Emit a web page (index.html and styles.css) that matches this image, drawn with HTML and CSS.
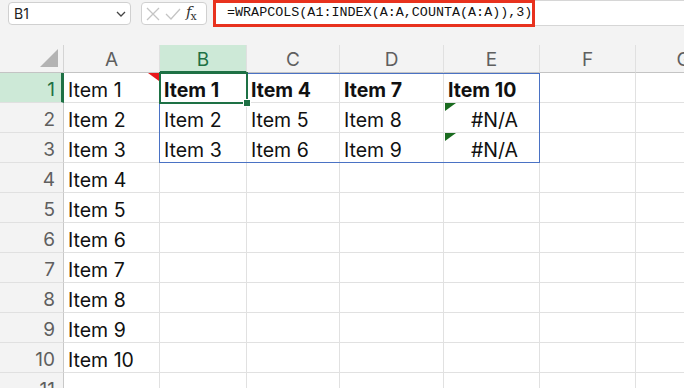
FILE: index.html
```html
<!DOCTYPE html>
<html lang="en">
<head>
    <meta charset="UTF-8">
    <title>WRAPCOLS</title>
    <link rel="stylesheet" href="styles.css">
</head>
<body>
    <div class="toolbar">
        <div class="namebox">
            <span>B1</span>
            <svg class="chev" width="10" height="6" viewBox="0 0 10 6"><path d="M1 1l4 4 4-4" fill="none" stroke="#444" stroke-width="1.3"/></svg>
        </div>
        <div class="fbuttons">
            <svg width="14" height="14" viewBox="0 0 14 14"><path d="M1 1l12 12M13 1L1 13" stroke="#c4c4c4" stroke-width="1.3"/></svg>
            <svg width="16" height="12" viewBox="0 0 16 12"><path d="M1 6l5 5L15 1" fill="none" stroke="#c4c4c4" stroke-width="1.3"/></svg>
            <span class="fx"><i>f</i><sub>x</sub></span>
        </div>
        <div class="formula">
            <span class="ftext">=WRAPCOLS(A1:INDEX(A:A,COUNTA(A:A)),3)</span>
        </div>
    </div>

    <div class="sheet">
        <div class="corner"><span class="tri"></span></div>
        <div class="colhead">A</div>
        <div class="colhead sel">B</div>
        <div class="colhead">C</div>
        <div class="colhead">D</div>
        <div class="colhead">E</div>
        <div class="colhead">F</div>
        <div class="colhead">G</div>

        <div class="rowhead sel">1</div>
        <div class="cell note">Item 1</div>
        <div class="cell b">Item 1</div>
        <div class="cell b">Item 4</div>
        <div class="cell b">Item 7</div>
        <div class="cell b">Item 10</div>
        <div class="cell"></div>
        <div class="cell"></div>

        <div class="rowhead">2</div>
        <div class="cell">Item 2</div>
        <div class="cell">Item 2</div>
        <div class="cell">Item 5</div>
        <div class="cell">Item 8</div>
        <div class="cell err">#N/A</div>
        <div class="cell"></div>
        <div class="cell"></div>

        <div class="rowhead">3</div>
        <div class="cell">Item 3</div>
        <div class="cell">Item 3</div>
        <div class="cell">Item 6</div>
        <div class="cell">Item 9</div>
        <div class="cell err">#N/A</div>
        <div class="cell"></div>
        <div class="cell"></div>

        <div class="rowhead">4</div><div class="cell">Item 4</div><div class="cell"></div><div class="cell"></div><div class="cell"></div><div class="cell"></div><div class="cell"></div><div class="cell"></div>
        <div class="rowhead">5</div><div class="cell">Item 5</div><div class="cell"></div><div class="cell"></div><div class="cell"></div><div class="cell"></div><div class="cell"></div><div class="cell"></div>
        <div class="rowhead">6</div><div class="cell">Item 6</div><div class="cell"></div><div class="cell"></div><div class="cell"></div><div class="cell"></div><div class="cell"></div><div class="cell"></div>
        <div class="rowhead">7</div><div class="cell">Item 7</div><div class="cell"></div><div class="cell"></div><div class="cell"></div><div class="cell"></div><div class="cell"></div><div class="cell"></div>
        <div class="rowhead">8</div><div class="cell">Item 8</div><div class="cell"></div><div class="cell"></div><div class="cell"></div><div class="cell"></div><div class="cell"></div><div class="cell"></div>
        <div class="rowhead">9</div><div class="cell">Item 9</div><div class="cell"></div><div class="cell"></div><div class="cell"></div><div class="cell"></div><div class="cell"></div><div class="cell"></div>
        <div class="rowhead">10</div><div class="cell">Item 10</div><div class="cell"></div><div class="cell"></div><div class="cell"></div><div class="cell"></div><div class="cell"></div><div class="cell"></div>
        <div class="rowhead">11</div><div class="cell"></div><div class="cell"></div><div class="cell"></div><div class="cell"></div><div class="cell"></div><div class="cell"></div><div class="cell"></div>

        <div class="spill"></div>
        <div class="active"><span class="handle"></span></div>
    </div>
</body>
</html>
```

FILE: styles.css
```css
body {
    margin: 0;
    width: 684px;
    height: 388px;
    overflow: hidden;
    background: #f3f3f3;
    font-family: Inter, "Noto Sans", sans-serif;
}

/* formula bar */
.toolbar {
    display: flex;
    align-items: flex-start;
    height: 45px;
    padding-top: 2px;
    box-sizing: border-box;
}
.namebox {
    margin-left: 8px;
    width: 123px;
    height: 23px;
    box-sizing: border-box;
    background: white;
    border: 1px solid #d0d0d0;
    border-radius: 4px;
    display: flex;
    align-items: center;
    justify-content: space-between;
    padding: 0 4px 0 5px;
    font-size: 14px;
    color: #222;
}
.chev { margin-top: 1px; }
.fbuttons {
    margin-left: 10px;
    width: 66px;
    height: 23px;
    box-sizing: border-box;
    background: white;
    border: 1px solid #d0d0d0;
    border-radius: 4px;
    display: flex;
    align-items: center;
    gap: 5px;
    padding: 0 4px;
}
.fx {
    font-family: "DejaVu Serif", serif;
    font-size: 15px;
    color: #333;
    line-height: 1;
}
.fx sub { font-size: 11px; font-style: normal; vertical-align: -3px; margin-left: -1px; }
.formula {
    margin-left: 6px;
    margin-top: -2px;
    flex: 1;
    height: 26px;
    box-sizing: border-box;
    background: white;
    border-top: 1px solid #d6d6d6;
    border-bottom: 1px solid #d6d6d6;
    position: relative;
}
.formula::before {
    content: "";
    position: absolute;
    left: 0;
    top: -1px;
    width: 322px;
    height: 27px;
    box-sizing: border-box;
    border: 3px solid #e8321e;
}
.ftext {
    position: relative;
    display: block;
    padding: 4px 0 0 14px;
    font-family: "Liberation Mono", monospace;
    font-size: 13.4px;
    color: #111;
}

/* grid */
.sheet {
    position: relative;
    display: grid;
    grid-template-columns: 64px 96px 87px 93px 104px 96px 96px 96px;
    grid-template-rows: 28px;
    grid-auto-rows: 30px;
    background: white;
}
.corner {
    background: #f3f3f3;
    border-right: 1px solid #d4d4d4;
    border-bottom: 1px solid #c4c4c4;
    position: relative;
}
.tri {
    position: absolute;
    right: 5px;
    bottom: 5px;
    width: 0;
    height: 0;
    border-left: 18px solid transparent;
    border-bottom: 18px solid #b3b3b3;
}
.colhead {
    background: #f3f3f3;
    border-right: 1px solid #e0e0e0;
    border-bottom: 1px solid #c4c4c4;
    text-align: center;
    font-size: 19px;
    line-height: 29px;
    color: #5f5f5f;
}
.colhead.sel {
    background: #cde9d7;
    color: #1e7145;
    border-bottom: 2px solid #1e7145;
}
.rowhead {
    background: #f3f3f3;
    border-right: 1px solid #c8c8c8;
    border-bottom: 1px solid #e0e0e0;
    text-align: right;
    padding-right: 8px;
    font-size: 19px;
    line-height: 34px;
    color: #5f5f5f;
    overflow: hidden;
}
.rowhead.sel {
    background: #cde9d7;
    color: #1e7145;
    border-right: 3px solid #1e7145;
    padding-right: 6px;
}
.cell {
    border-right: 1px solid #e1e1e1;
    border-bottom: 1px solid #e1e1e1;
    padding-left: 4px;
    font-size: 19.5px;
    line-height: 34px;
    color: #111;
    white-space: nowrap;
    position: relative;
    overflow: hidden;
}
.cell.b { font-weight: 700; }
.cell.err { text-align: center; padding-left: 6px; }
.cell.note { overflow: visible; }
.cell.note::after {
    content: "";
    position: absolute;
    right: 0;
    top: 0;
    border-left: 11px solid transparent;
    border-top: 8px solid #e8191c;
}
.cell.err::before {
    content: "";
    position: absolute;
    left: 1px;
    top: 0;
    border-right: 11px solid transparent;
    border-top: 8px solid #1a6b1f;
}

/* overlays on the grid */
.spill {
    position: absolute;
    left: 159px;
    top: 28px;
    width: 381px;
    height: 90px;
    border: 1px solid #4a72c4;
    box-sizing: border-box;
}
.active {
    position: absolute;
    left: 159px;
    top: 27px;
    width: 89px;
    height: 32px;
    border: 2px solid #1e7145;
    box-sizing: border-box;
}
.handle {
    position: absolute;
    right: -5px;
    bottom: -5px;
    width: 6px;
    height: 6px;
    background: #1e7145;
    border: 1px solid white;
}
```
